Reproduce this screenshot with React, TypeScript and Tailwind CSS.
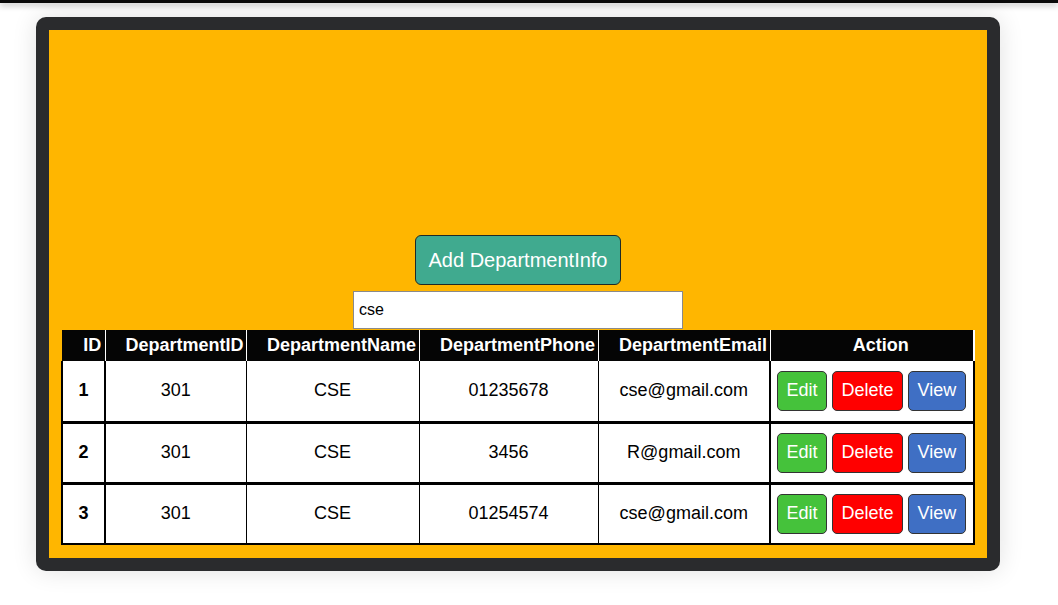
import React from 'react'

const rows = [
    { id: 1, deptId: 301, name: 'CSE', phone: '01235678', email: 'cse@gmail.com' },
    { id: 2, deptId: 301, name: 'CSE', phone: '3456', email: 'R@gmail.com' },
    { id: 3, deptId: 301, name: 'CSE', phone: '01254574', email: 'cse@gmail.com' },
]

function App() {
    return (
        <div className='w-full min-h-[605px] bg-white font-["Liberation_Sans",Arial,sans-serif]'>
            <div className='h-[3px] w-full bg-[#0a0a0a] shadow-[0_2px_6px_rgba(0,0,0,0.35)]'></div>
            <div className='ml-[36px] mt-[14px] w-[964px] h-[554px] rounded-[10px] bg-[#2a2b2d] p-[13px] shadow-[0_0_24px_rgba(0,0,0,0.12)]'>
                <div className='w-full h-full bg-[#ffb600] flex flex-col items-center justify-end pb-[13px]'>
                    <button className='w-[206px] h-[50px] rounded-[6px] border border-[#1f2a26] bg-[#40aa8f] text-white text-[20px]'>
                        Add DepartmentInfo
                    </button>
                    <input
                        defaultValue='cse'
                        className='mt-[6px] mb-[1px] w-[330px] h-[38px] bg-white border border-[#8a8a8a] px-[5px] text-[16px] text-black outline-none'
                    />
                    <table className='w-[912px] table-fixed border-collapse'>
                        <colgroup>
                            <col className='w-[43px]' />
                            <col className='w-[141px]' />
                            <col className='w-[173px]' />
                            <col className='w-[179px]' />
                            <col className='w-[172px]' />
                            <col className='w-[204px]' />
                        </colgroup>
                        <thead>
                            <tr className='h-[31px] bg-[#050505] text-white text-[18px] font-bold'>
                                <th className='pl-[18px] border-r border-white'>ID</th>
                                <th className='pl-[18px] border-r border-white'>DepartmentID</th>
                                <th className='pl-[18px] border-r border-white'>DepartmentName</th>
                                <th className='pl-[18px] border-r border-white'>DepartmentPhone</th>
                                <th className='pl-[18px] border-r border-white'>DepartmentEmail</th>
                                <th className='pl-[18px] border-r-2 border-white'>Action</th>
                            </tr>
                        </thead>
                        <tbody className='bg-white text-black text-[18px]'>
                            {rows.map((r) => (
                                <tr key={r.id} className='h-[61px] border-b-[3px] border-black last:border-b-2'>
                                    <td className='text-center font-bold border-l-2 border-r-2 border-black'>{r.id}</td>
                                    <td className='text-center border-r border-black'>{r.deptId}</td>
                                    <td className='text-center border-r border-black'>{r.name}</td>
                                    <td className='text-center border-r border-black'>{r.phone}</td>
                                    <td className='text-center border-r-2 border-black'>{r.email}</td>
                                    <td className='border-r-2 border-black pl-[6px]'>
                                        <div className='flex gap-[5px]'>
                                            <button className='h-[40px] px-[8.5px] rounded-[5px] border border-[#333] bg-[#45c23b] text-white'>Edit</button>
                                            <button className='h-[40px] px-[8.5px] rounded-[5px] border border-[#333] bg-[#ff0000] text-white'>Delete</button>
                                            <button className='h-[40px] px-[8.5px] rounded-[5px] border border-[#333] bg-[#3f6fc4] text-white'>View</button>
                                        </div>
                                    </td>
                                </tr>
                            ))}
                        </tbody>
                    </table>
                </div>
            </div>
        </div>
    )
}

export default App
